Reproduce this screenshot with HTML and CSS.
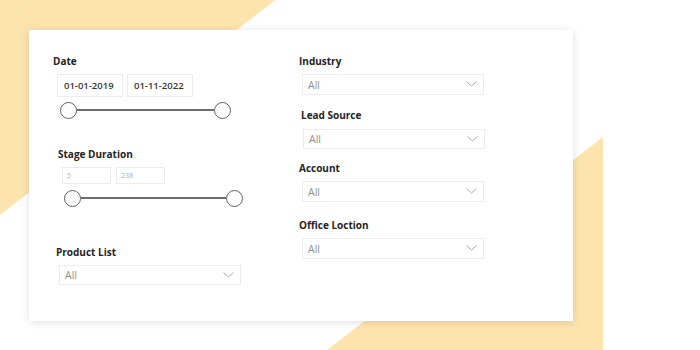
FILE: index.html
```html
<!DOCTYPE html>
<html lang="en">
<head>
  <meta charset="UTF-8" />
  <meta name="viewport" content="width=device-width, initial-scale=1.0"/>
  <title>Opportunity Filters</title>
  <link rel="stylesheet" href="styles.css">
</head>
<body>
  <!-- yellow backdrop shapes -->
  <svg class="backdrop" width="700" height="350" viewBox="0 0 700 350">
    <polygon points="0,0 275,0 0,215" fill="#fde4ad"/>
    <polygon points="603,137 603,350 327,350" fill="#fde4ad"/>
  </svg>

  <div class="filter-card">
    <div class="column">
      <div class="field-label">Date</div>
      <div class="range-inputs date-inputs">
        <div class="range-box">01-01-2019</div>
        <div class="range-box">01-11-2022</div>
      </div>
      <div class="slider date-slider">
        <span class="knob"></span><span class="track"></span><span class="knob"></span>
      </div>

      <div class="field-label stage-label">Stage Duration</div>
      <div class="range-inputs stage-inputs">
        <div class="range-box small">5</div>
        <div class="range-box small">238</div>
      </div>
      <div class="slider stage-slider">
        <span class="knob"></span><span class="track"></span><span class="knob"></span>
      </div>

      <div class="field-label product-label">Product List</div>
      <div class="dropdown product-dropdown">
        <span>All</span>
        <svg class="chevron" width="11" height="6" viewBox="0 0 11 6"><polyline points="0.5,0.5 5.5,5 10.5,0.5" fill="none" stroke="#a8a8a8" stroke-width="1"/></svg>
      </div>
    </div>

    <div class="column right">
      <div class="field-label">Industry</div>
      <div class="dropdown">
        <span>All</span>
        <svg class="chevron" width="11" height="6" viewBox="0 0 11 6"><polyline points="0.5,0.5 5.5,5 10.5,0.5" fill="none" stroke="#a8a8a8" stroke-width="1"/></svg>
      </div>

      <div class="field-label lead-label">Lead Source</div>
      <div class="dropdown lead-dropdown">
        <span>All</span>
        <svg class="chevron" width="11" height="6" viewBox="0 0 11 6"><polyline points="0.5,0.5 5.5,5 10.5,0.5" fill="none" stroke="#a8a8a8" stroke-width="1"/></svg>
      </div>

      <div class="field-label account-label">Account</div>
      <div class="dropdown">
        <span>All</span>
        <svg class="chevron" width="11" height="6" viewBox="0 0 11 6"><polyline points="0.5,0.5 5.5,5 10.5,0.5" fill="none" stroke="#a8a8a8" stroke-width="1"/></svg>
      </div>

      <div class="field-label office-label">Office Loction</div>
      <div class="dropdown">
        <span>All</span>
        <svg class="chevron" width="11" height="6" viewBox="0 0 11 6"><polyline points="0.5,0.5 5.5,5 10.5,0.5" fill="none" stroke="#a8a8a8" stroke-width="1"/></svg>
      </div>
    </div>
  </div>
</body>
</html>
```

FILE: styles.css
```css
body {
  margin: 0;
  width: 700px;
  height: 350px;
  overflow: hidden;
  background: #ffffff;
  font-family: "Open Sans", "Noto Sans", Arial, sans-serif;
  position: relative;
}
.backdrop {
  position: absolute;
  left: 0;
  top: 0;
}
.filter-card {
  position: relative;
  margin: 30px 0 0 29px;
  width: 544px;
  height: 291px;
  box-sizing: border-box;
  padding: 24px 0 0 24px;
  background: #ffffff;
  box-shadow: 0 1px 8px rgba(0, 0, 0, 0.13);
  display: grid;
  grid-template-columns: 246px 186px;
}
.column {
  display: flex;
  flex-direction: column;
  align-items: flex-start;
}
.field-label {
  font-size: 10px;
  font-weight: 700;
  line-height: 14px;
  color: #252423;
}
.stage-label { margin: 28px 0 0 5px; }
.product-label { margin: 38px 0 0 3px; }
.lead-label { margin: 13px 0 0 2px; }
.account-label { margin-top: 12px; }
.office-label { margin-top: 16px; }

.range-inputs {
  display: flex;
  gap: 4px;
}
.date-inputs { margin: 6px 0 0 4px; }
.stage-inputs { margin: 6px 0 0 9px; gap: 5px; }
.range-box {
  box-sizing: border-box;
  width: 66px;
  height: 23px;
  border: 1px solid #ececec;
  padding-left: 6px;
  font-size: 9.5px;
  font-weight: 600;
  line-height: 21px;
  color: #333333;
}
.range-box.small {
  width: 49px;
  height: 17px;
  padding-left: 4px;
  font-size: 7px;
  font-weight: 400;
  line-height: 15px;
  color: #b0b0b0;
}

.slider {
  display: flex;
  align-items: center;
  height: 18px;
}
.date-slider { margin: 4px 0 0 7px; width: 171px; }
.stage-slider { margin: 5px 0 0 11px; width: 179px; }
.track {
  flex: 1;
  height: 2px;
  background: #6b6b6b;
}
.knob {
  box-sizing: border-box;
  width: 17px;
  height: 17px;
  border: 1.5px solid #606060;
  border-radius: 50%;
  background: #ffffff;
}

.dropdown {
  box-sizing: border-box;
  width: 182px;
  height: 21px;
  margin: 6px 0 0 3px;
  border: 1px solid #ececec;
  display: flex;
  align-items: center;
  justify-content: space-between;
  padding: 0 6px 0 5px;
  font-size: 10.5px;
  color: #8f8f8f;
}
.product-dropdown { height: 20px; margin-left: 6px; }
.lead-dropdown { margin: 7px 0 0 4px; height: 20px; }
.chevron { margin-top: -1px; }
```
